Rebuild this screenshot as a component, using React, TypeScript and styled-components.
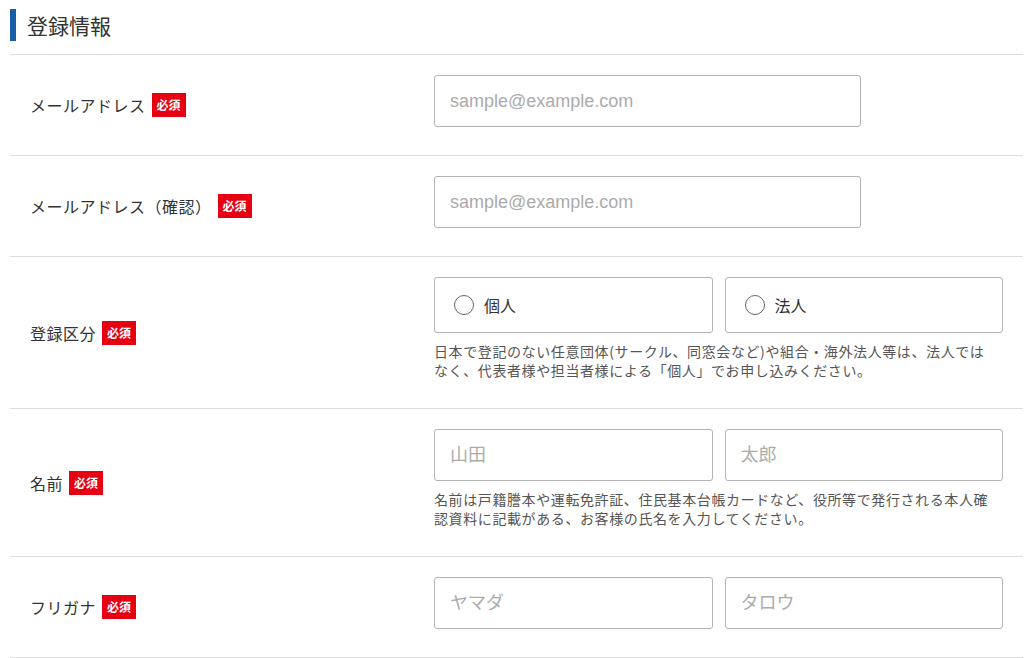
import React from 'react';
import styled, { createGlobalStyle } from 'styled-components';

const GlobalStyle = createGlobalStyle`
  body {
    margin: 0;
    background: #fff;
    font-family: 'Noto Sans CJK JP', 'Noto Sans', sans-serif;
    color: #333;
  }
`;

const Page = styled.div`
  width: 1013px;
  padding-left: 10px;
`;

const Header = styled.div`
  padding: 9px 0 13px;
  border-bottom: 1px solid #dedede;
`;

const Heading = styled.h2`
  margin: 0;
  border-left: 6px solid #1b5ea8;
  padding-left: 11px;
  font-size: 21px;
  line-height: 32px;
  font-weight: 400;
  color: #333;
`;

const Row = styled.div`
  display: flex;
  align-items: center;
  padding: 0 20px;
  border-bottom: 1px solid #dedede;
`;

const LabelCell = styled.div`
  width: 404px;
  flex-shrink: 0;
  display: flex;
  align-items: center;
`;

const LabelText = styled.span`
  font-size: 16px;
  letter-spacing: 0.5px;
  color: #333;
`;

const Badge = styled.span`
  display: inline-block;
  margin-left: 6px;
  padding: 0 5px;
  background: #e60012;
  color: #fff;
  font-size: 12px;
  font-weight: bold;
  line-height: 24px;
`;

const FieldCell = styled.div`
  flex: 1;
  padding: 20px 0 28px;
`;

const TextInput = styled.input<{ $wide?: boolean }>`
  display: block;
  box-sizing: border-box;
  width: ${(p) => (p.$wide ? '75%' : '100%')};
  height: 52px;
  padding: 0 15px;
  border: 1px solid #b3b3b3;
  border-radius: 3px;
  font-family: 'Liberation Sans', 'Noto Sans CJK JP', sans-serif;
  font-size: 18px;
  color: #333;
  background: #fff;

  &::placeholder {
    color: #ababab;
  }

  &:focus {
    outline: none;
    border-color: #1b5ea8;
  }
`;

const Pair = styled.div`
  display: grid;
  grid-template-columns: 1fr 1fr;
  gap: 12px;
`;

const RadioBox = styled.label`
  display: flex;
  align-items: center;
  gap: 10px;
  box-sizing: border-box;
  height: 56px;
  padding-left: 19px;
  border: 1px solid #b3b3b3;
  border-radius: 3px;
  font-size: 16px;
  color: #333;
  cursor: pointer;
`;

const Radio = styled.input`
  appearance: none;
  margin: 0;
  width: 20px;
  height: 20px;
  border: 1px solid #666;
  border-radius: 50%;
  background: #fff;

  &:checked {
    box-shadow: inset 0 0 0 4px #fff;
    background: #1b5ea8;
  }
`;

const Note = styled.p`
  margin: 9px 0 0;
  font-size: 14px;
  line-height: 19px;
  letter-spacing: 0.6px;
  color: #555;
  white-space: nowrap;
`;

interface FieldRowProps {
  label: string;
  children: React.ReactNode;
}

const FieldRow: React.FC<FieldRowProps> = ({ label, children }) => (
  <Row>
    <LabelCell>
      <LabelText>{label}</LabelText>
      <Badge>必須</Badge>
    </LabelCell>
    <FieldCell>{children}</FieldCell>
  </Row>
);

const App: React.FC = () => {
  return (
    <>
      <GlobalStyle />
      <Page>
        <Header>
          <Heading>登録情報</Heading>
        </Header>

        <FieldRow label='メールアドレス'>
          <TextInput $wide type='email' placeholder='sample@example.com' />
        </FieldRow>

        <FieldRow label='メールアドレス（確認）'>
          <TextInput $wide type='email' placeholder='sample@example.com' />
        </FieldRow>

        <FieldRow label='登録区分'>
          <Pair>
            <RadioBox>
              <Radio type='radio' name='kind' value='personal' />
              個人
            </RadioBox>
            <RadioBox>
              <Radio type='radio' name='kind' value='corporate' />
              法人
            </RadioBox>
          </Pair>
          <Note>
            日本で登記のない任意団体(サークル、同窓会など)や組合・海外法人等は、法人では
            <br />
            なく、代表者様や担当者様による「個人」でお申し込みください。
          </Note>
        </FieldRow>

        <FieldRow label='名前'>
          <Pair>
            <TextInput type='text' placeholder='山田' />
            <TextInput type='text' placeholder='太郎' />
          </Pair>
          <Note>
            名前は戸籍謄本や運転免許証、住民基本台帳カードなど、役所等で発行される本人確
            <br />
            認資料に記載がある、お客様の氏名を入力してください。
          </Note>
        </FieldRow>

        <FieldRow label='フリガナ'>
          <Pair>
            <TextInput type='text' placeholder='ヤマダ' />
            <TextInput type='text' placeholder='タロウ' />
          </Pair>
        </FieldRow>
      </Page>
    </>
  );
};

export default App;
